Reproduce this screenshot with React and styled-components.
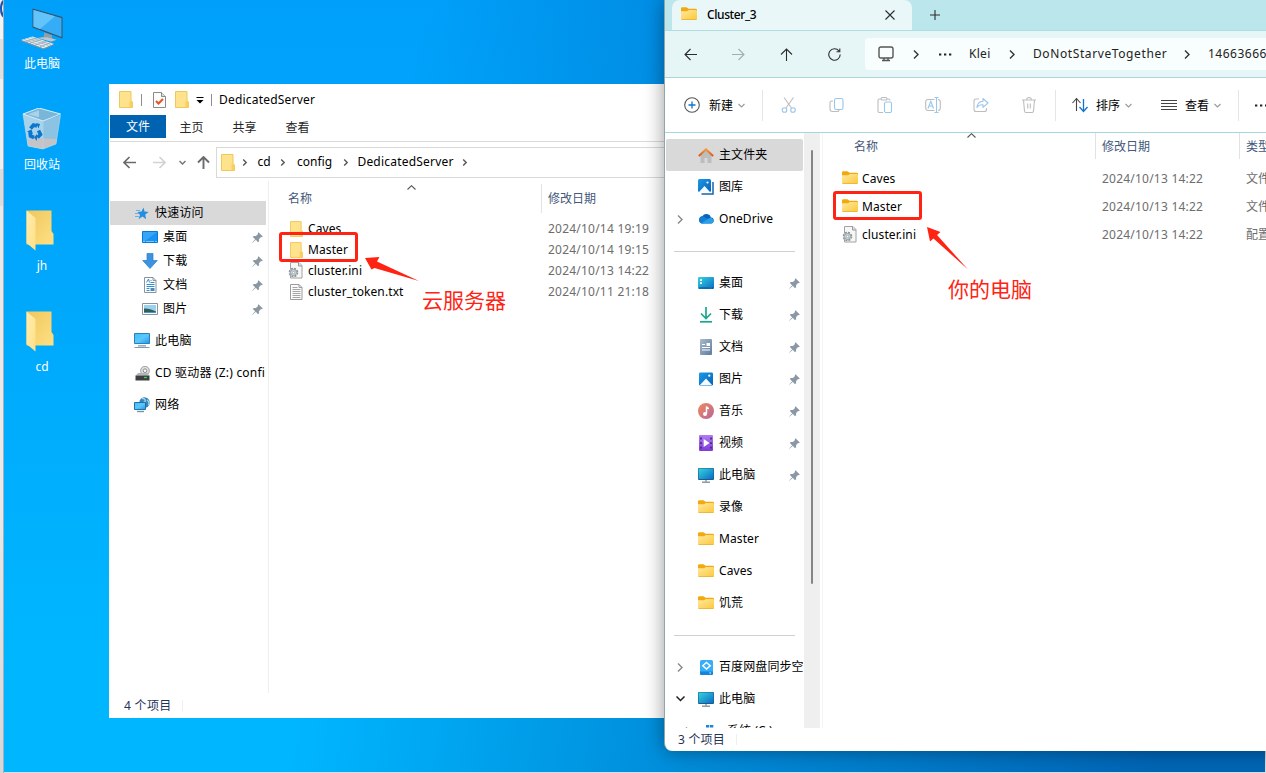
import React from "react";
import styled, { createGlobalStyle } from "styled-components";

const GlobalStyle = createGlobalStyle`
  * {
    box-sizing: border-box;
  }
  body {
    margin: 0;
    overflow: hidden;
    font-family: "Noto Sans", "Noto Sans CJK SC", sans-serif;
    font-size: 12px;
    line-height: 16px;
    color: #000;
  }
  svg {
    display: block;
    flex: none;
  }
`;

function Gradients() {
  return (
    <DefsHolder width="0" height="0">
      <defs>
        <linearGradient id="screen" x1="0" y1="0" x2="1" y2="1">
          <stop offset="0" stopColor="#35d3e0" />
          <stop offset="1" stopColor="#0a6cc4" />
        </linearGradient>
        <linearGradient id="screen10" x1="0" y1="0" x2="1" y2="1">
          <stop offset="0" stopColor="#3dbdf8" />
          <stop offset="0.5" stopColor="#5cc8fb" />
          <stop offset="1" stopColor="#1f97f0" />
        </linearGradient>
        <linearGradient id="folder" x1="0" y1="0" x2="1" y2="1">
          <stop offset="0" stopColor="#ffe8a0" />
          <stop offset="1" stopColor="#fcc93a" />
        </linearGradient>
        <linearGradient id="folderBack" x1="0" y1="0" x2="1" y2="1">
          <stop offset="0" stopColor="#eec75e" />
          <stop offset="1" stopColor="#ffe083" />
        </linearGradient>
        <linearGradient id="folderFlap" x1="0" y1="0" x2="1" y2="1">
          <stop offset="0" stopColor="#ffedb0" />
          <stop offset="1" stopColor="#ffe086" />
        </linearGradient>
        <linearGradient id="photo" x1="0" y1="0" x2="1" y2="1">
          <stop offset="0" stopColor="#1a9ae6" />
          <stop offset="1" stopColor="#0a62b8" />
        </linearGradient>
        <linearGradient id="music" x1="0" y1="0" x2="1" y2="1">
          <stop offset="0" stopColor="#f08a5c" />
          <stop offset="1" stopColor="#b8659c" />
        </linearGradient>
        <linearGradient id="video" x1="0" y1="0" x2="0" y2="1">
          <stop offset="0" stopColor="#b27cf2" />
          <stop offset="1" stopColor="#7e3ad6" />
        </linearGradient>
        <linearGradient id="roof" x1="0" y1="0" x2="0" y2="1">
          <stop offset="0" stopColor="#f59b3a" />
          <stop offset="1" stopColor="#d65a1c" />
        </linearGradient>
        <linearGradient id="steel" x1="0" y1="0" x2="1" y2="1">
          <stop offset="0" stopColor="#a9bacd" />
          <stop offset="1" stopColor="#5f7c9e" />
        </linearGradient>
      </defs>
    </DefsHolder>
  );
}

/* ---------- desktop icons ---------- */

const ComputerIcon = () => (
  <svg width="44" height="42" viewBox="0 0 44 42">
    <path d="M12.500.500 42.500 9v21.500L12.500 19.500z" fill="#3a5266" />
    <path d="M13.500 2 41.500 10v19L13.500 18.500z" fill="#35acf6" />
    <path d="M13.500 2 35 8.200 20 21 13.500 18.500z" fill="#63c4fb" />
    <path d="M24 24.500v4l-6 1.200 14 4 5-2-5-1.500v-3z" fill="#8fa0ab" />
    <path d="M18 30 31 33.500l5-1.800-9-2.500z" fill="#bcc8cf" />
    <path d="m1 32 11.500-3.500L34 36l-10.500 4.500z" fill="#e8edf0" />
    <path d="M1 32v1.200l22.500 8.300L34 37v-1l-10.500 4.500z" fill="#7f929f" />
    <path
      d="m4 31.500 21 7.500M7.500 30.500l21 7M11 29.500l20 7M6 33.500l11-3.500M10 35l11-3.500M15 37l11-3.500M20 38.700 30 35"
      stroke="#8ea1ae"
      strokeWidth=".7"
    />
  </svg>
);

const RecycleIcon = () => (
  <svg width="40" height="44" viewBox="0 1 40 44">
    <path d="m1 7 20 7 17.500-6L34 37l-13 5-15-3z" fill="#8cc3e2" />
    <path d="m1 7 20 7v28L6 39z" fill="#a6d2ea" />
    <path d="m5 33 8-2 22 1-1 5-13 5-15-3z" fill="#c9c2c3" opacity=".9" />
    <path d="M1 7 17 1l21.500 6L21 14z" fill="#7ab6d8" stroke="#d8edf7" strokeWidth="1" />
    <path d="m6 7.200 11-4v7z" fill="#a8d3e8" />
    <path d="m1 7 5 32 15 3 13-5L38.500 8M21 14v28" stroke="#b5d8ea" strokeWidth=".6" fill="none" />
    <g fill="none" stroke="#0a76cf" strokeWidth="3.600">
      <path d="m8.500 21.500 3-3.500 3.500 1" />
      <path d="m8 25 .5 4 3.500 1.500" />
      <path d="m15.500 30.500 3-3-2-4" />
    </g>
    <path d="m14 16 4 1-1.500 4.500zM5 24.500l4.500-2L11 27zM15 27v7l-3-3.500z" fill="#0a76cf" />
  </svg>
);

const DesktopFolder = () => (
  <svg width="28" height="42" viewBox="0 0 28 42">
    <path d="M.500.500h25V21l2 3v10.500H.500z" fill="url(#folderBack)" />
    <path d="M.500.500 9.500 8v32.500L.500 33z" fill="url(#folderFlap)" />
  </svg>
);

/* ---------- explorer icons ---------- */

const Folder10 = ({ w = 14, h = 17 }) => (
  <svg width={w} height={h} viewBox="0 0 14 17">
    <path d="M.500.500h11.500v9.500l1.500 1v5.500H.500z" fill="#ffe28c" stroke="#efc75a" />
    <path d="M10.500 10.500h3v6h-3z" fill="#f9cf5e" />
  </svg>
);

const Folder11 = () => (
  <svg width="16" height="15" viewBox="0 0 16 15">
    <path d="M0 1.500Q0 .200 1.300.200h4.200L7.500 1.700h7Q16 1.700 16 3v2H0z" fill="#f2a90f" />
    <path d="M0 4.300h6L8 3h6.700Q16 3 16 4.200v7.300q0 1.300-1.300 1.300H1.300Q0 12.800 0 11.500z" fill="url(#folder)" />
    <path d="M.5 12.500h15" stroke="#e9ae28" strokeWidth=".8" />
  </svg>
);

const CheckDoc = () => (
  <svg width="13" height="16" viewBox="0 0 13 16">
    <path d="M.500.500h8l4 4v11H.500z" fill="#fcfcfc" stroke="#8a8a8a" />
    <path d="M8.500.500v4h4" fill="#ddd" stroke="#8a8a8a" />
    <path d="m3 9 2.500 2.500L10 7" fill="none" stroke="#e8541e" strokeWidth="2" />
  </svg>
);

const IniIcon = () => (
  <svg width="16" height="17" viewBox="0 0 16 17">
    <path d="M2.500.500h8.500l3 3v12.500H2.500z" fill="#f7f7f7" stroke="#a2a2a2" />
    <path d="M10.500.500v3.500h3.500" fill="#ddd" stroke="#999" />
    <circle cx="5.500" cy="10.500" r="4" fill="#e5e9eb" stroke="#88949b" strokeWidth="1.600" strokeDasharray="2 1.140" />
    <circle cx="5.500" cy="10.500" r="3" fill="#d5dadd" stroke="#88949b" strokeWidth=".8" />
    <circle cx="5.500" cy="10.500" r="1.200" fill="#fff" stroke="#88949b" strokeWidth=".7" />
  </svg>
);

const TxtIcon = () => (
  <svg width="13" height="16" viewBox="0 0 13 16">
    <path d="M.500.500h8.500l3 3v12H.500z" fill="#fbfbfb" stroke="#9c9c9c" />
    <path d="M9 .500v3h3" fill="none" stroke="#9c9c9c" />
    <path d="M2.500 3.500h5M2.500 5.500h8M2.500 7.500h8M2.500 9.500h8M2.500 11.500h8M2.500 13.500h8" stroke="#9a9a9a" strokeWidth=".9" />
  </svg>
);

const PinIcon = () => (
  <svg width="11" height="11" viewBox="0 0 11 11">
    <path d="M6.500.200 10.800 4.500 9.700 5.300 9 5 7 7.200l.1 2L6 10.200 3.800 7.800.500 10.800.200 10.500 3.200 7.200.800 5l1-1.100 2.100.1L6.100 2 5.700 1.200z" fill="#8b97a3" />
  </svg>
);

const StarIcon = () => (
  <svg width="14" height="13" viewBox="0 0 14 13">
    <path d="M8.500.500 9.500 4.500 13.700 5 10.300 7.500 11 12.300 7.500 9.500 3.500 12.300 5 8 2.500 5 6.500 4.500z" fill="#2490dd" />
    <path d="M1 3.500h4M0 6.500h4M0 9.500h4" stroke="#67b3e8" strokeWidth="1" />
  </svg>
);

const Desktop10 = () => (
  <svg width="16" height="12" viewBox="0 0 16 12">
    <path d="M.500.500h15v11H.500z" fill="#1793f4" stroke="#0a78d6" />
    <path d="M1 1h14L3 10H1z" fill="#37a6f8" />
    <path d="M1 10.500h14" stroke="#9bd4ff" strokeDasharray="2 1 8 1" strokeWidth=".8" />
  </svg>
);

const Download10 = () => (
  <svg width="16" height="16" viewBox="0 0 16 16">
    <path d="M5 .500h6v7h4.300L8 15.500.700 7.500H5z" fill="#3c93e0" stroke="#2b7dca" strokeWidth=".7" />
  </svg>
);

const Document10 = () => (
  <svg width="13" height="16" viewBox="0 0 13 16">
    <path d="M.500.500h8.500l3 3v12H.500z" fill="#fff" stroke="#8c9499" />
    <path d="M9 .500v3h3" fill="none" stroke="#8c9499" />
    <path d="M2.500 5.500 4.500 2l1 3.500M6.500 3.500h1M6.500 5.500h4M2.500 7.500h8M2.500 9.500h8M2.500 11.500h3M2.500 13.500h3" stroke="#2d8fdd" strokeWidth="1" fill="none" />
    <path d="M6.500 11h4v3h-4z" fill="#4b8bb8" />
  </svg>
);

const Picture10 = () => (
  <svg width="16" height="12" viewBox="0 0 16 12">
    <path d="M.500.500h15v11H.500z" fill="#fff" stroke="#8b9399" />
    <path d="M2 2h12v8H2z" fill="#9bd0f5" />
    <path d="M2 5.500q5-.500 12 3V10H2z" fill="#2f5f57" />
    <path d="M2 9h12v1H2z" fill="#4a94cf" />
  </svg>
);

const Computer10 = () => (
  <svg width="16" height="16" viewBox="0 0 16 16">
    <path d="M.500.500h15v10H.500z" fill="url(#screen10)" stroke="#2c7fb8" />
    <path d="M.500 14.500h15M4 12.800h8" stroke="#7f9bb0" strokeWidth="1.200" />
  </svg>
);

const DiscDrive = () => (
  <svg width="15" height="15" viewBox="0 0 15 15">
    <circle cx="10" cy="4.700" r="4.400" fill="#dedede" stroke="#8f8f8f" strokeWidth=".8" />
    <circle cx="10" cy="4.700" r="1.800" fill="#fff" stroke="#8c8c8c" />
    <path d="M3 7h9.500L14.300 9.500H.700z" fill="#b5b5b5" />
    <path d="M.500 9.500h14v5H.500z" fill="#3c3f41" />
    <path d="M9 11.500h3" stroke="#3bd34e" strokeWidth="1.300" />
  </svg>
);

const Network10 = () => (
  <svg width="16" height="16" viewBox="0 0 16 16">
    <circle cx="10.500" cy="5.500" r="5.200" fill="#3186ba" />
    <path d="M8 1.500q4-.500 3 3.500-4 1-4 3M13 3q3 2 1.500 5" fill="none" stroke="#9cd4e8" strokeWidth="1.500" />
    <path d="M.500 5.500h11v7H.500z" fill="url(#screen10)" stroke="#256fa3" />
    <path d="M3 14.500h7" stroke="#7693a6" strokeWidth="1.400" />
  </svg>
);

const HomeIcon = () => (
  <svg width="16" height="15" viewBox="0 0 16 15">
    <path d="M2.500 6.500 8 1.800l5.500 4.700V15h-4v-5h-3v5h-4z" fill="#bdbdbd" />
    <path d="M.800 8 8 1.300 15.200 8" fill="none" stroke="url(#roof)" strokeWidth="2" />
  </svg>
);

const GalleryIcon = () => (
  <svg width="16" height="16" viewBox="0 0 16 16">
    <path d="M3.500 15H15V3" fill="none" stroke="#1565ad" strokeWidth="1.500" />
    <rect width="13" height="13" rx="1.500" fill="url(#photo)" />
    <path d="m1 13 5.500-6L12 13z" fill="#f4fbff" />
    <circle cx="9.500" cy="3.500" r="1.100" fill="#fff" />
  </svg>
);

const OneDriveIcon = () => (
  <svg width="16" height="13" viewBox="0 0 16 13">
    <path d="M4 10.500a3.700 3.700 0 0 1 .300-7.300A4.800 4.800 0 0 1 13 4.500a3 3 0 0 1-.500 6z" fill="#0b63b8" />
    <path d="M4 10.500A3.700 3.700 0 0 1 5 3.300L10 6 5 10.500z" fill="#117fd6" />
    <path d="M3 10.400 10.500 5.500a3 3 0 0 1 4.800 2.500 2.700 2.700 0 0 1-2.800 2.600H4z" fill="#2aa0ea" />
  </svg>
);

const Desktop11 = () => (
  <svg width="16" height="12" viewBox="0 0 16 12">
    <rect width="16" height="12" rx="1" fill="url(#screen)" />
    <path d="M2 2.200h2v1.800H2zM2 5.200h2V7H2z" fill="#fff" />
    <path d="M1 11h14" stroke="#0c4c86" strokeDasharray="10 1 1 1" strokeWidth="1" />
  </svg>
);

const Download11 = () => (
  <svg width="14" height="16" viewBox="0 0 14 16">
    <path d="M7 0v11M2 6.500 7 11.500l5-5" fill="none" stroke="#1ba88c" strokeWidth="1.700" />
    <path d="M1 14.800h12" stroke="#1ba88c" strokeWidth="1.700" />
  </svg>
);

const Document11 = () => (
  <svg width="13" height="16" viewBox="0 0 13 16">
    <rect width="12" height="16" rx="1" fill="url(#steel)" />
    <path d="M2 5.500h3M2 8.500h8M2 11h8" stroke="#fff" strokeWidth="1.200" />
    <path d="M6.500 4H10v3H6.500z" fill="#fff" />
  </svg>
);

const Picture11 = () => (
  <svg width="14" height="14" viewBox="0 0 15 14">
    <rect width="15" height="14" rx="1.500" fill="url(#photo)" />
    <path d="m1 13.500 6.500-7 6.500 7z" fill="#f4fbff" />
    <circle cx="11" cy="3.500" r="1.200" fill="#fff" />
  </svg>
);

const MusicIcon = () => (
  <svg width="16" height="16" viewBox="0 0 16 16">
    <circle cx="8" cy="8" r="8" fill="url(#music)" />
    <path d="M8.500 10.500V3.500q.5 2 2.500 2" fill="none" stroke="#fff" strokeWidth="1.500" />
    <circle cx="7" cy="11" r="2" fill="#fff" />
  </svg>
);

const VideoIcon = () => (
  <svg width="14" height="16" viewBox="0 0 14 16">
    <rect width="14" height="16" rx="1" fill="url(#video)" />
    <path d="M2 2.600v12M12 2.600v12" stroke="#3f2378" strokeWidth="1.600" strokeDasharray="1.800 2.800" />
    <path d="M4.700 4v8L10.500 8z" fill="#fff" />
  </svg>
);

const Computer11 = () => (
  <svg width="16" height="15" viewBox="0 0 16 15">
    <rect width="16" height="12" rx="1" fill="#1b5d86" />
    <rect x=".6" y=".6" width="14.800" height="10.500" rx=".6" fill="url(#screen)" />
    <path d="M8 12v2.300M4 14.300h8" stroke="#8b9aa5" strokeWidth="1.400" />
  </svg>
);

const CloudSync = () => (
  <svg width="13" height="15" viewBox="0 0 13 15">
    <rect width="13" height="15" rx="1.500" fill="#36aef8" />
    <path d="M0 11.500h13v2q0 1.500-1.500 1.500h-10Q0 15 0 13.500z" fill="#1684d8" />
    <path d="m6.500 2.500 3.700 3.300-3.700 3.300-3.700-3.300z" fill="none" stroke="#fff" strokeWidth="1.500" />
    <path d="M9.500 13h1.500" stroke="#fff" />
  </svg>
);

const DriveIcon = () => (
  <svg width="16" height="13" viewBox="0 0 16 13">
    <path d="M0 0h3.300v2.500H0zM4 0h3.300v2.500H4zM0 3.200h3.300v2.500H0zM4 3.200h3.300v2.500H4z" fill="#1586dc" />
    <path d="M0 7h14v4H0z" fill="#9aa2a8" />
  </svg>
);

const Glyph = ({ w = 16, h = 16, d, color = "#2c2c2c", sw = 1.1, children }) => (
  <svg width={w} height={h} viewBox={`0 0 ${w} ${h}`} fill="none" stroke={color} strokeWidth={sw}>
    <path d={d} />
    {children}
  </svg>
);

const ARROW_LEFT = "M13 6.500H1M6.500 1 1 6.500 6.500 12";
const ARROW_RIGHT = "M0 6.500h12M6.500 1 12 6.500 6.500 12";
const ARROW_UP = "M6.500 13V1M1 6.500 6.500 1 12 6.500";

const ChevronRight = ({ color = "#555", big }) => (
  <Glyph w={6} h={9} d={big ? "M1 .500 5 4.500 1 8.500" : "M1.200 1.500 4.200 4.500 1.200 7.500"} color={color} sw={1.4} />
);

const ChevronDown = ({ color = "#999" }) => <Glyph w={7} h={5} d="M.500 1 3.500 4 6.500 1" color={color} />;

const SortMark = () => <Glyph w={9} h={5} d="M.500 4.500 4.500.700 8.500 4.500" color="#555" />;

/* ---------- data ---------- */

const shortcuts = [
  { label: "此电脑", icon: <ComputerIcon /> },
  { label: "回收站", icon: <RecycleIcon /> },
  { label: "jh", icon: <DesktopFolder />, folder: true },
  { label: "cd", icon: <DesktopFolder />, folder: true },
];

const serverNav = [
  { label: "快速访问", icon: <StarIcon />, active: true },
  { label: "桌面", icon: <Desktop10 />, child: true },
  { label: "下载", icon: <Download10 />, child: true },
  { label: "文档", icon: <Document10 />, child: true },
  { label: "图片", icon: <Picture10 />, child: true },
  { label: "此电脑", icon: <Computer10 />, gap: true },
  { label: "CD 驱动器 (Z:) confi", icon: <DiscDrive />, gap: true },
  { label: "网络", icon: <Network10 />, gap: true },
];

const serverFiles = [
  { name: "Caves", date: "2024/10/14 19:19", icon: <Folder10 w={13} h={16} /> },
  { name: "Master", date: "2024/10/14 19:15", icon: <Folder10 w={13} h={16} /> },
  { name: "cluster.ini", date: "2024/10/13 14:22", icon: <IniIcon /> },
  { name: "cluster_token.txt", date: "2024/10/11 21:18", icon: <TxtIcon /> },
];

const localNav = [
  { label: "主文件夹", icon: <HomeIcon />, active: true },
  { label: "图库", icon: <GalleryIcon /> },
  { label: "OneDrive", icon: <OneDriveIcon />, arrow: "right" },
  { divider: true },
  { label: "桌面", icon: <Desktop11 />, pin: true },
  { label: "下载", icon: <Download11 />, pin: true },
  { label: "文档", icon: <Document11 />, pin: true },
  { label: "图片", icon: <Picture11 />, pin: true },
  { label: "音乐", icon: <MusicIcon />, pin: true },
  { label: "视频", icon: <VideoIcon />, pin: true },
  { label: "此电脑", icon: <Computer11 />, pin: true },
  { label: "录像", icon: <Folder11 /> },
  { label: "Master", icon: <Folder11 /> },
  { label: "Caves", icon: <Folder11 /> },
  { label: "饥荒", icon: <Folder11 /> },
  { divider: true },
  { label: "百度网盘同步空", icon: <CloudSync />, arrow: "right" },
  { label: "此电脑", icon: <Computer11 />, arrow: "down" },
  { label: "系统 (C:)", icon: <DriveIcon />, arrow: "right", child: true },
];

const localFiles = [
  { name: "Caves", date: "2024/10/13 14:22", type: "文件夹", icon: <Folder11 /> },
  { name: "Master", date: "2024/10/13 14:22", type: "文件夹", icon: <Folder11 /> },
  { name: "cluster.ini", date: "2024/10/13 14:22", type: "配置设置", icon: <IniIcon /> },
];

/* ---------- windows ---------- */

function ServerWindow() {
  return (
    <ServerFrame>
      <ServerTitle>
        <Folder10 />
        <TitleRule $left={8} $right={11} />
        <CheckDoc />
        <Slot $width={9} />
        <Folder10 />
        <Slot $width={7} />
        <svg width="8" height="8" viewBox="0 0 8 8">
          <path d="M.500 1.500h7" stroke="#000" />
          <path d="M.500 4h7L4 7.500z" />
        </svg>
        <TitleRule $left={7} $right={7} />
        <Text $ls={0.2}>DedicatedServer</Text>
      </ServerTitle>
      <Ribbon>
        <RibbonTab $active>文件</RibbonTab>
        <RibbonTab>主页</RibbonTab>
        <RibbonTab>共享</RibbonTab>
        <RibbonTab>查看</RibbonTab>
      </Ribbon>
      <ServerAddress>
        <NavArrows>
          <Glyph w={13} h={13} d={ARROW_LEFT} color="#6b6b6b" sw={1.7} />
          <Glyph w={13} h={13} d={ARROW_RIGHT} color="#d2d2d2" sw={1.7} />
          <Glyph w={7} h={5} d="M.500 1 3.500 4 6.500 1" color="#777" sw={1.5} />
          <Glyph w={13} h={13} d={ARROW_UP} color="#6b6b6b" sw={1.9} />
        </NavArrows>
        <ServerPath>
          <Folder10 />
          <Slot $width={7} />
          <ChevronRight />
          <Crumb $width={32}>cd</Crumb>
          <ChevronRight />
          <Crumb $width={57}>config</Crumb>
          <ChevronRight />
          <Crumb $width={113}>
            <Text $ls={0.2}>DedicatedServer</Text>
          </Crumb>
          <ChevronRight />
        </ServerPath>
      </ServerAddress>
      <ServerBody>
        <ServerNav>
          {serverNav.map((item) => (
            <ServerNavItem key={item.label} $active={item.active} $child={item.child} $gap={item.gap}>
              <IconBox $width={16}>{item.icon}</IconBox>
              <NavLabel>{item.label}</NavLabel>
              {item.child && <PinIcon />}
            </ServerNavItem>
          ))}
        </ServerNav>
        <ServerList>
          <ServerHead>
            <HeadCell $width={253}>
              名称
              <ServerSort>
                <SortMark />
              </ServerSort>
            </HeadCell>
            <HeadRule $height={29} />
            <HeadCell>修改日期</HeadCell>
          </ServerHead>
          {serverFiles.map((file) => (
            <ServerRow key={file.name}>
              <IconBox $width={16}>{file.icon}</IconBox>
              <FileName>{file.name}</FileName>
              <FileDate>{file.date}</FileDate>
            </ServerRow>
          ))}
        </ServerList>
      </ServerBody>
      <ServerStatus>
        4 个项目
        <StatusRule />
      </ServerStatus>
    </ServerFrame>
  );
}

function LocalToolbar() {
  return (
    <Toolbar>
      <ToolLabelled $width={97} $left={19}>
        <Glyph d="M15.300 8A7.300 7.300 0 1 1 .700 8a7.300 7.300 0 0 1 14.600 0" color="#555">
          <path d="M8 4.500v7M4.500 8h7" stroke="#1273cc" strokeWidth="1.300" />
        </Glyph>
        <ToolText $left={9}>新建</ToolText>
        <ChevronDown />
      </ToolLabelled>
      <ToolRule />
      <ToolIcons>
        <Glyph d="M3 .500 10.500 11M12.500.500 5 11" color="#bdbdbd">
          <circle cx="3.500" cy="13" r="2.300" stroke="#9ac6ec" />
          <circle cx="12" cy="13" r="2.300" stroke="#9ac6ec" />
        </Glyph>
        <Glyph d="M4 4H3Q1 4 1 6v6q0 2.500 2.500 2.500H8q2 0 2-2" color="#bdbdbd">
          <rect x="5.500" y="1.500" width="8.500" height="11" rx="1.800" stroke="#9ac6ec" />
        </Glyph>
        <Glyph d="M4 2H2.500Q1 2 1 3.500v10.500Q1 15.500 2.500 15.500H6M10 2h1.500Q13 2 13 3.500M4 2q0-1.500 1.500-1.500h3Q10 .500 10 2q0 1-1.500 1h-3Q4 3 4 2" color="#bdbdbd">
          <rect x="7.500" y="5" width="7" height="10.500" rx="1.500" stroke="#9ac6ec" />
        </Glyph>
        <Glyph d="M9.500 2.500H3Q.700 2.500.700 5v6q0 2.500 2.300 2.500h6.500M13 2.500q2.300 0 2.300 2.500v6q0 2.500-2.300 2.500" color="#bdbdbd">
          <path d="M11.500.500v15M9.500.500h4M9.500 15.500h4M3 11.500l2.800-7.300 2.700 7.300M4 9h3.600" stroke="#9ac6ec" />
        </Glyph>
        <Glyph d="M6 2H3Q1 2 1 4v8.500q0 2 2 2h8.500q2 0 2-2V11" color="#bdbdbd">
          <path d="M10 1.500 15 6l-5 4.300V7.800Q6 7.500 4 10.500 4.500 4.500 10 4.200z" stroke="#9ac6ec" strokeLinejoin="round" />
        </Glyph>
        <Glyph d="M1 3h14M5.500 3Q5.500.500 8 .500T10.500 3M2.500 3l1 11q.1 1.500 1.500 1.500h6q1.400 0 1.500-1.500l1-11M6.700 6.500v5M9.300 6.500v5" color="#bdbdbd" />
      </ToolIcons>
      <ToolRule />
      <ToolLabelled $width={90} $left={16}>
        <Glyph d="M4.500 14V2M.500 6l4-4.500L8.500 6" color="#444">
          <path d="M11.500 2v12M7.500 10l4 4.500 4-4.500" stroke="#1273cc" strokeWidth="1.300" />
        </Glyph>
        <ToolText $left={8}>排序</ToolText>
        <ChevronDown />
      </ToolLabelled>
      <ToolLabelled $width={92} $left={15}>
        <Glyph d="M0 3.500h16M0 6.500h16M0 9.500h16M0 12.500h16" color="#444" />
        <ToolText $left={8}>查看</ToolText>
        <ChevronDown />
      </ToolLabelled>
      <ToolRule />
      <Slot $width={16} />
      <Dots />
    </Toolbar>
  );
}

const Dots = () => (
  <svg width="13" height="3" viewBox="0 0 13 3">
    <path d="M0 .500h2.300v2H0zM5 .500h2.300v2H5zM10 .500h2.300v2H10z" fill="#222" />
  </svg>
);

function LocalWindow() {
  return (
    <LocalFrame>
      <TabStrip>
        <Tab>
          <Folder11 />
          <TabTitle>Cluster_3</TabTitle>
          <Glyph w={10} h={10} d="m.500.500 9 9M9.500.500l-9 9" />
        </Tab>
        <Slot $width={18} />
        <Glyph w={10} h={10} d="M5 0v10M0 5h10" />
      </TabStrip>
      <LocalAddress>
        <LocalArrows>
          <Glyph w={13} h={13} d={ARROW_LEFT} />
          <Glyph w={13} h={13} d={ARROW_RIGHT} color="#9fb0b2" />
          <Glyph w={13} h={13} d={ARROW_UP} />
          <Glyph w={13} h={13} d="M11 3A5.700 5.700 0 1 0 12.200 6.500M11.800.500v3.300H8.500" />
        </LocalArrows>
        <LocalPath>
          <Glyph d="M3 1h10q2 0 2 2v7q0 2-2 2H3q-2 0-2-2V3q0-2 2-2M6 12v2.500M10 12v2.500M4 14.500h8" color="#555" sw={1.4} />
          <Slot $width={19} />
          <ChevronRight big color="#333" />
          <Slot $width={20} />
          <Dots />
          <Slot $width={17} />
          <Crumb $width={40} $start>
            <Text $ls={0.3}>Klei</Text>
          </Crumb>
          <ChevronRight big color="#333" />
          <Slot $width={18} />
          <Crumb $width={151} $start>
            <Text $ls={0.6}>DoNotStarveTogether</Text>
          </Crumb>
          <ChevronRight big color="#333" />
          <Slot $width={18} />
          <Crumb $start>
            <Text $ls={0.5}>14663666</Text>
          </Crumb>
        </LocalPath>
      </LocalAddress>
      <LocalToolbar />
      <LocalBody>
        <LocalNav>
          {localNav.map((item, i) =>
            item.divider ? (
              <NavDivider key={i} />
            ) : (
              <LocalNavItem key={i} $active={item.active} $child={item.child}>
                <ArrowBox>
                  {item.arrow === "right" && <ChevronRight big color="#888" />}
                  {item.arrow === "down" && <Glyph w={9} h={6} d="M.500.500 4.500 4.500 8.500.500" color="#222" sw={1.5} />}
                </ArrowBox>
                <IconBox $width={16}>{item.icon}</IconBox>
                <NavLabel>{item.label}</NavLabel>
                {item.pin && <PinIcon />}
              </LocalNavItem>
            )
          )}
        </LocalNav>
        <ScrollTrack>
          <ScrollThumb />
        </ScrollTrack>
        <LocalList>
          <LocalHead>
            <HeadCell $width={241}>
              名称
              <LocalSort>
                <SortMark />
              </LocalSort>
            </HeadCell>
            <HeadRule $height={26} />
            <HeadCell $width={137}>修改日期</HeadCell>
            <HeadRule $height={26} />
            <HeadCell>类型</HeadCell>
          </LocalHead>
          {localFiles.map((file) => (
            <LocalRow key={file.name}>
              <IconBox $width={16}>{file.icon}</IconBox>
              <FileName>{file.name}</FileName>
              <FileDate $width={144}>{file.date}</FileDate>
              <FileDate $plain>{file.type}</FileDate>
            </LocalRow>
          ))}
        </LocalList>
      </LocalBody>
      <LocalStatus>
        3 个项目
        <StatusRule />
      </LocalStatus>
    </LocalFrame>
  );
}

export default function App() {
  return (
    <Screen>
      <GlobalStyle />
      <Gradients />
      <EdgeStrip>
        <svg width="3" height="18" viewBox="0 0 3 18">
          <path d="M3 0Q0 2 0 8.500T3 17.500V13Q2 12 2 8.500T3 4z" fill="#1d55b5" />
        </svg>
      </EdgeStrip>
      <Desktop>
        <Shortcuts>
          {shortcuts.map(({ label, icon, folder }) => (
            <Shortcut key={label}>
              <ShortcutIcon $folder={folder}>{icon}</ShortcutIcon>
              <ShortcutLabel>{label}</ShortcutLabel>
            </Shortcut>
          ))}
        </Shortcuts>
        <ServerWindow />
        <LocalWindow />
      </Desktop>
      <Highlight $x={279} $y={232} $w={79} $h={30} />
      <Highlight $x={833} $y={191} $w={89} $h={29} />
      <Pointer $x={364} $y={256}>
        <svg width="56" height="26" viewBox="0 0 56 26">
          <path d="M1 2 15.500 1 13 5.500 55 25 10.500 12 7.500 13.500z" fill="#ff2314" />
        </svg>
      </Pointer>
      <Pointer $x={926} $y={226}>
        <svg width="43" height="44" viewBox="0 0 43 44">
          <path d="M1 1 14.500 6 11 9 42 43.500 7.500 12.500 4 15.500z" fill="#ff2314" />
        </svg>
      </Pointer>
      <Note $x={422} $y={286}>云服务器</Note>
      <Note $x={948} $y={275}>你的电脑</Note>
    </Screen>
  );
}

/* ---------- styles ---------- */

const Screen = styled.div`
  position: relative;
  display: flex;
  width: 1266px;
  height: 773px;
  overflow: hidden;
  background: #d8dcde;
`;

const DefsHolder = styled.svg`
  position: absolute;
`;

const EdgeStrip = styled.div`
  width: 4px;
  height: 773px;
  border-right: 1px solid #9eb2bf;
  background: linear-gradient(
    #f3f3f3 39px,
    #dfdfdf 39px 79px,
    #efefef 79px 169px,
    #dcdcdc 169px 206px,
    #e9e9e9 206px 500px,
    #d6d6d6
  );
`;

const Desktop = styled.div`
  position: relative;
  width: 1261px;
  height: 772px;
  background: linear-gradient(100deg, transparent 30%, rgba(0, 96, 178, 0.45) 56%, #0065b5 92%),
    linear-gradient(#00a0fa, #00a8fc 40%, #00b6ff 85%);
`;

const Shortcuts = styled.div`
  display: flex;
  flex-direction: column;
  width: 76px;
`;

const Shortcut = styled.div`
  display: flex;
  flex-direction: column;
  align-items: center;
  height: 101px;
  padding-top: 7px;
`;

const ShortcutIcon = styled.div`
  display: flex;
  align-items: center;
  height: 44px;
  margin-right: ${({ $folder }) => ($folder ? "5px" : "1px")};
`;

const ShortcutLabel = styled.span`
  margin-top: 5px;
  color: #fff;
`;

const Text = styled.span`
  letter-spacing: ${({ $ls }) => $ls}px;
`;

const Slot = styled.span`
  flex: none;
  width: ${({ $width }) => $width}px;
`;

const IconBox = styled.span`
  display: flex;
  flex: none;
  align-items: center;
  justify-content: center;
  width: ${({ $width }) => $width}px;
`;

const Crumb = styled.span`
  flex: none;
  width: ${({ $width }) => ($width ? `${$width}px` : "auto")};
  text-align: ${({ $start }) => ($start ? "left" : "center")};
  white-space: nowrap;
`;

const NavLabel = styled.span`
  flex: 1;
  overflow: hidden;
  letter-spacing: 0.2px;
  white-space: nowrap;
`;

const HeadCell = styled.span`
  position: relative;
  flex: none;
  width: ${({ $width }) => ($width ? `${$width}px` : "auto")};
  color: #44587a;
`;

const HeadRule = styled.span`
  flex: none;
  align-self: flex-start;
  width: 1px;
  height: ${({ $height }) => $height}px;
  margin-right: 6px;
  background: #e2e2e2;
`;

const FileName = styled.span`
  flex: none;
  width: 244px;
  padding-left: 4px;
  letter-spacing: 0.1px;
`;

const FileDate = styled.span`
  flex: none;
  width: ${({ $width }) => ($width ? `${$width}px` : "auto")};
  color: #6d6d6d;
  letter-spacing: ${({ $plain }) => ($plain ? 0 : 0.22)}px;
  white-space: nowrap;
`;

const StatusRule = styled.span`
  width: 1px;
  height: 11px;
  margin-left: 11px;
  background: #efefef;
`;

const Frame = styled.div`
  position: absolute;
  display: flex;
  flex-direction: column;
  overflow: hidden;
  background: #fff;
`;

const ServerFrame = styled(Frame)`
  top: 84px;
  left: 105px;
  width: 700px;
  height: 634px;
  padding-left: 1px;
`;

const ServerTitle = styled.div`
  display: flex;
  align-items: center;
  height: 31px;
  padding-left: 9px;
`;

const TitleRule = styled.span`
  width: 1px;
  height: 12px;
  margin: 0 ${({ $right }) => $right}px 0 ${({ $left }) => $left}px;
  background: #8d8d8d;
`;

const Ribbon = styled.div`
  display: flex;
  height: 27px;
  border-bottom: 1px solid #dadada;
`;

const RibbonTab = styled.span`
  width: ${({ $active }) => ($active ? 56 : 53)}px;
  height: 23px;
  margin-right: ${({ $active }) => ($active ? -1 : 0)}px;
  line-height: ${({ $active }) => ($active ? 24 : 26)}px;
  text-align: center;
  color: ${({ $active }) => ($active ? "#fff" : "#262626")};
  background: ${({ $active }) => ($active ? "#0063b1" : "transparent")};
`;

const ServerAddress = styled.div`
  display: flex;
  height: 39px;
  padding-top: 5px;
`;

const NavArrows = styled.div`
  display: grid;
  grid-template-columns: 30px 26px 18px 19px;
  align-items: center;
  width: 106px;
  height: 31px;
  padding-left: 13px;
`;

const ServerPath = styled.div`
  display: flex;
  flex: 1;
  align-items: center;
  height: 31px;
  padding: 0 0 1px 4px;
  border: 1px solid #d9d9d9;
`;

const ServerBody = styled.div`
  display: flex;
  height: 512px;
`;

const ServerNav = styled.div`
  width: 159px;
  padding-top: 20px;
  border-right: 1px solid #efefef;
`;

const ServerNavItem = styled.div`
  display: flex;
  align-items: center;
  gap: 5px;
  width: 156px;
  height: 24px;
  margin-top: ${({ $gap }) => ($gap ? 8 : 0)}px;
  padding-right: ${({ $child }) => ($child ? 3 : 0)}px;
  padding-left: ${({ $child }) => ($child ? 32 : 24)}px;
  background: ${({ $active }) => ($active ? "#d9d9d9" : "transparent")};
`;

const ServerList = styled.div`
  flex: 1;
  padding-left: 19px;
`;

const ServerHead = styled.div`
  display: flex;
  align-items: center;
  height: 29px;
  margin: 3px 0 5px;
`;

const ServerSort = styled.span`
  position: absolute;
  top: -6px;
  left: 119px;
`;

const ServerRow = styled.div`
  display: flex;
  align-items: center;
  height: 21px;
`;

const ServerStatus = styled.div`
  display: flex;
  align-items: center;
  height: 25px;
  padding-left: 14px;
  color: #1f3557;
  letter-spacing: 0.3px;
`;

const LocalFrame = styled(Frame)`
  top: 0;
  left: 660px;
  width: 700px;
  height: 751px;
  border-left: 1px solid #8fa6aa;
  border-bottom-left-radius: 8px;
  box-shadow: 0 0 20px rgba(0, 0, 0, 0.4);
`;

const TabStrip = styled.div`
  display: flex;
  align-items: center;
  height: 31px;
  padding-left: 7px;
  border-bottom: 1px solid #aedde2;
  background: #bbe6eb;
`;

const Tab = styled.div`
  display: flex;
  align-items: center;
  width: 240px;
  height: 30px;
  padding: 0 17px 1px 9px;
  border-radius: 8px 8px 0 0;
  background: #e9f7f8;
`;

const TabTitle = styled.span`
  flex: 1;
  padding-left: 10px;
  font-weight: 500;
  letter-spacing: -0.4px;
`;

const LocalAddress = styled.div`
  display: flex;
  height: 47px;
  padding: 7px 0;
  border-bottom: 1px solid #a9d5da;
  background: #e6f6f7;
`;

const LocalArrows = styled.div`
  display: grid;
  grid-template-columns: repeat(4, 48px);
  align-items: center;
  width: 200px;
  padding-left: 19px;
`;

const LocalPath = styled.div`
  display: flex;
  flex: 1;
  align-items: center;
  padding-left: 13px;
  border-radius: 4px;
  color: #222;
  background: #f8fdfd;
`;

const Toolbar = styled.div`
  display: flex;
  align-items: center;
  height: 55px;
  border-bottom: 1px solid #a6d7da;
`;

const ToolLabelled = styled.div`
  display: flex;
  align-items: center;
  width: ${({ $width }) => $width}px;
  padding-left: ${({ $left }) => $left}px;
`;

const ToolText = styled.span`
  padding: 1px 5px 0 ${({ $left }) => $left}px;
`;

const ToolRule = styled.span`
  width: 1px;
  height: 31px;
  background: #e5e5e5;
`;

const ToolIcons = styled.div`
  display: flex;
  gap: 32px;
  width: 292px;
  padding-left: 18px;
`;

const LocalBody = styled.div`
  display: flex;
  height: 595px;
  overflow: hidden;
`;

const LocalNav = styled.div`
  width: 139px;
  padding: 6px 1px 0;
`;

const LocalNavItem = styled.div`
  display: flex;
  align-items: center;
  height: 32px;
  padding-right: 3px;
  padding-left: ${({ $child }) => ($child ? 8 : 0)}px;
  border-radius: 2px;
  background: ${({ $active }) => ($active ? "#d9d9d9" : "transparent")};

  ${NavLabel} {
    margin-right: -3px;
    padding-left: 5px;
    letter-spacing: 0.1px;
  }
`;

const ArrowBox = styled.span`
  display: flex;
  flex: none;
  justify-content: center;
  width: 32px;
  padding-right: 4px;
`;

const NavDivider = styled.div`
  height: 1px;
  margin: 16px 8px 15px;
  background: #d0d0d0;
`;

const ScrollTrack = styled.div`
  width: 16px;
  padding: 17px 0 0 7px;
  background: #efefef;
`;

const ScrollThumb = styled.div`
  width: 2px;
  height: 434px;
  border-radius: 1px;
  background: #858585;
`;

const LocalList = styled.div`
  flex: 1;
  margin-left: 2px;
  padding-left: 19px;
  border-left: 1px solid #f5f5f5;
`;

const LocalHead = styled.div`
  display: flex;
  align-items: center;
  height: 28px;
  margin-bottom: 4px;
  padding-left: 12px;
`;

const LocalSort = styled.span`
  position: absolute;
  top: -6px;
  left: 113px;
`;

const LocalRow = styled.div`
  display: flex;
  align-items: center;
  height: 28px;

  ${IconBox} {
    padding-bottom: 2px;
  }
`;

const LocalStatus = styled.div`
  display: flex;
  align-items: center;
  height: 23px;
  padding-left: 13px;
  color: #1f3557;
  letter-spacing: 0.2px;
`;

const Highlight = styled.div`
  position: absolute;
  top: ${({ $y }) => $y}px;
  left: ${({ $x }) => $x}px;
  width: ${({ $w }) => $w}px;
  height: ${({ $h }) => $h}px;
  border: 3px solid #ff2314;
  border-radius: 3px;
`;

const Pointer = styled.div`
  position: absolute;
  top: ${({ $y }) => $y}px;
  left: ${({ $x }) => $x}px;
`;

const Note = styled.div`
  position: absolute;
  top: ${({ $y }) => $y}px;
  left: ${({ $x }) => $x}px;
  font-size: 21px;
  line-height: 28px;
  color: #ff2314;
`;
